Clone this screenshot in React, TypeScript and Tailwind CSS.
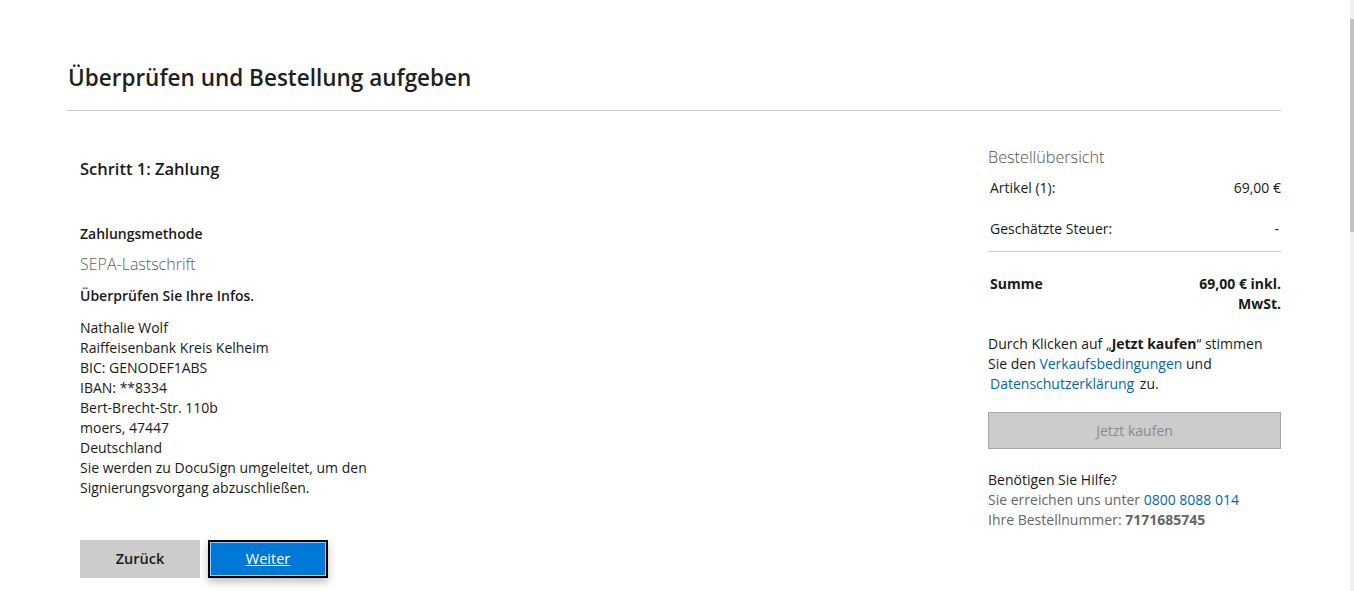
import React from "react";

export default function App() {
  return (
    <div
      className="relative h-[591px] w-full overflow-hidden bg-white text-[#1a1a1a]"
      style={{ fontFamily: '"Open Sans", "Noto Sans", sans-serif' }}
    >
      <div className="ml-[67px] w-[1214px] pt-[61px]">
        <h1 className="pl-[1px] text-[22.5px] font-semibold leading-[34px] text-[#1f1f1f]">
          Überprüfen und Bestellung aufgeben
        </h1>
        <div className="mt-[15px] h-px bg-[#cccccc]" />

        <div className="flex justify-between">
          {/* Left column */}
          <div className="w-[400px] pl-[13px] pt-[46px]">
            <h2 className="text-[16.5px] font-semibold leading-[24px]">Schritt 1: Zahlung</h2>
            <div className="mt-[43px] text-[14px] font-semibold leading-[20px]">Zahlungsmethode</div>
            <div className="mt-[9px] text-[16px] font-light leading-[22px] text-[#5e5e5e]">SEPA-Lastschrift</div>
            <div className="mt-[11px] text-[14px] font-semibold leading-[20px]">Überprüfen Sie Ihre Infos.</div>
            <div className="mt-[12px] text-[14px] leading-[20px]">
              <div>Nathalie Wolf</div>
              <div>Raiffeisenbank Kreis Kelheim</div>
              <div>BIC: GENODEF1ABS</div>
              <div>IBAN: **8334</div>
              <div>Bert-Brecht-Str. 110b</div>
              <div>moers, 47447</div>
              <div>Deutschland</div>
              <div>Sie werden zu DocuSign umgeleitet, um den</div>
              <div>Signierungsvorgang abzuschließen.</div>
            </div>
            <div className="mt-[42px] flex gap-[8px]">
              <button className="flex h-[38px] w-[120px] items-center justify-center bg-[#cccccc] text-[14.5px] font-semibold text-[#1a1a1a]">
                Zurück
              </button>
              <button className="flex h-[38px] w-[120px] items-center justify-center border-2 border-black bg-[#0078d7] text-[14.5px] text-white underline shadow-[0_4px_8px_rgba(0,0,0,0.25)] outline outline-1 -outline-offset-3 outline-[#9cc9f0]">
                Weiter
              </button>
            </div>
          </div>

          {/* Right column */}
          <div className="w-[293px] pt-[35px]">
            <div className="text-[16.2px] font-light leading-[22px] text-[#505050]">Bestellübersicht</div>
            <div className="mt-[10px] flex justify-between pl-[2px] text-[14px] leading-[20px]">
              <span>Artikel (1):</span>
              <span>69,00 €</span>
            </div>
            <div className="mt-[21px] flex justify-between pl-[2px] pr-[2px] text-[14px] leading-[20px]">
              <span>Geschätzte Steuer:</span>
              <span>-</span>
            </div>
            <div className="mt-[12px] h-px bg-[#cccccc]" />
            <div className="mt-[22px] flex justify-between pl-[2px] text-[14px] font-bold leading-[20px]">
              <span>Summe</span>
              <span className="text-right">
                69,00 € inkl.
                <br />
                MwSt.
              </span>
            </div>
            <p className="mt-[20px] text-[14px] leading-[20px]">
              Durch Klicken auf „<span className="font-bold">Jetzt kaufen</span>“ stimmen Sie den{" "}
              <a className="text-[#0067b8]">Verkaufsbedingungen</a> und{" "}
              <a className="ml-[2px] mr-[2px] text-[#0067b8]">Datenschutzerklärung</a> zu.
            </p>
            <button className="mt-[18px] flex h-[37px] w-full items-center justify-center border border-[#a6a6a6] bg-[#cccccc] text-[14px] text-[#8a8a8a]">
              Jetzt kaufen
            </button>
            <div className="mt-[21px] text-[14px] leading-[20px]">
              <div>Benötigen Sie Hilfe?</div>
              <div className="text-[#666666]">
                Sie erreichen uns unter <span className="text-[#0067b8]">0800 8088 014</span>
              </div>
              <div className="text-[#666666]">
                Ihre Bestellnummer: <span className="font-bold">7171685745</span>
              </div>
            </div>
          </div>
        </div>
      </div>

      {/* overlay scrollbar */}
      <div className="absolute right-0 top-0 h-full w-[4px] bg-[#f0f0f0]">
        <div className="mt-[19px] h-[213px] w-full bg-[#c2c2c2]" />
      </div>
    </div>
  );
}
